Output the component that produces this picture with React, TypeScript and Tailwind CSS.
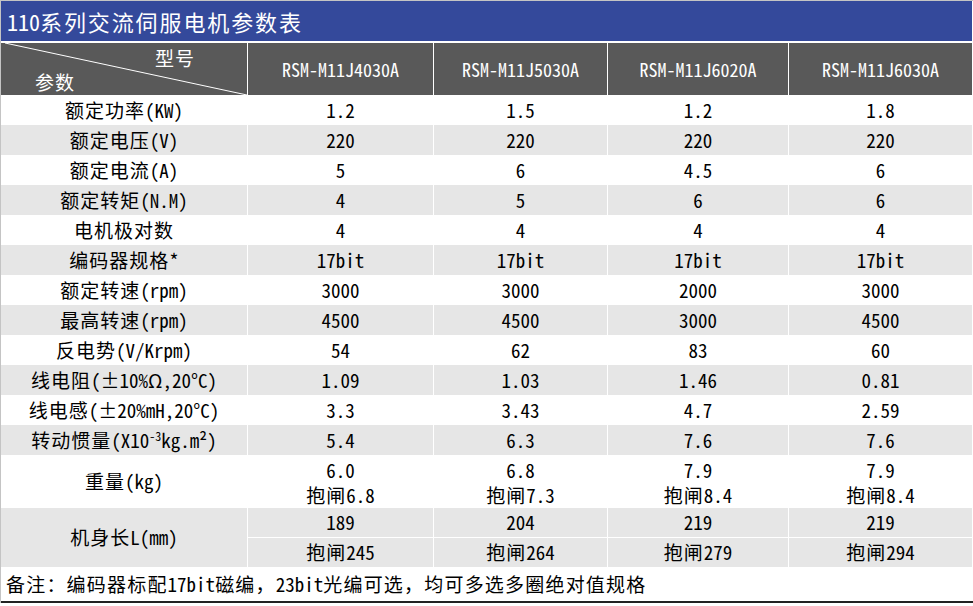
import React from "react";

const font = { fontFamily: '"Noto Sans Mono CJK SC", "Noto Sans CJK SC", "DejaVu Sans", sans-serif' };

const CJK = /([\u3000-\u303f\u4e00-\u9fff\uff00-\uffef]+)/;

function T({ s, cls = "tracking-[1px]" }: { s: string; cls?: string }) {
  const parts = s.split(CJK);
  return (
    <>
      {parts.map((p, i) =>
        p === "" ? null : CJK.test(p) ? (
          <span key={i} className={cls}>
            {p}
          </span>
        ) : (
          <span key={i}>{p}</span>
        )
      )}
    </>
  );
}

type Row = { label: React.ReactNode; vals: string[] };

const rows: Row[] = [
  { label: <T s="额定功率(KW)" />, vals: ["1.2", "1.5", "1.2", "1.8"] },
  { label: <T s="额定电压(V)" />, vals: ["220", "220", "220", "220"] },
  { label: <T s="额定电流(A)" />, vals: ["5", "6", "4.5", "6"] },
  { label: <T s="额定转矩(N.M)" />, vals: ["4", "5", "6", "6"] },
  { label: <T s="电机极对数" />, vals: ["4", "4", "4", "4"] },
  { label: <T s="编码器规格*" />, vals: ["17bit", "17bit", "17bit", "17bit"] },
  { label: <T s="额定转速(rpm)" />, vals: ["3000", "3000", "2000", "3000"] },
  { label: <T s="最高转速(rpm)" />, vals: ["4500", "4500", "3000", "4500"] },
  { label: <T s="反电势(V/Krpm)" />, vals: ["54", "62", "83", "60"] },
  { label: <T s="线电阻(±10%Ω,20°C)" />, vals: ["1.09", "1.03", "1.46", "0.81"] },
  { label: <T s="线电感(±20%mH,20°C)" />, vals: ["3.3", "3.43", "4.7", "2.59"] },
  {
    label: (
      <span>
        <T s="转动惯量" />
        (X10<sup className="text-[12px] -top-[7px]">-3</sup>kg.m²)
      </span>
    ),
    vals: ["5.4", "6.3", "7.6", "7.6"],
  },
];

const models = ["RSM-M11J4030A", "RSM-M11J5030A", "RSM-M11J6020A", "RSM-M11J6030A"];
const weights = [
  ["6.0", "抱闸6.8"],
  ["6.8", "抱闸7.3"],
  ["7.9", "抱闸8.4"],
  ["7.9", "抱闸8.4"],
];
const lengths = [
  ["189", "抱闸245"],
  ["204", "抱闸264"],
  ["219", "抱闸279"],
  ["219", "抱闸294"],
];

const cols = "grid grid-cols-[246px_185px_173px_180px_183px] gap-x-px";

export default function App() {
  return (
    <div className="w-[973px] h-[606px] bg-white text-black" style={font}>
      <div className="border-t border-l border-[#c4c4c4] w-[973px]">
        <div className="h-[40px] w-[971px] bg-[#34499b] text-white text-[22px] leading-[40px] pl-[6px]">
          <T s="110系列交流伺服电机参数表" cls="tracking-[1.9px]" />
        </div>
        <div className="h-[2px]" />
        <div className={cols + " bg-white"}>
          <div className="relative h-[52px] bg-[#595959] text-white text-[19px] leading-[24px] flex flex-col pt-[3px]">
            <svg className="absolute inset-0" width="246" height="52" viewBox="0 0 246 52">
              <line x1="4" y1="0" x2="246" y2="52" stroke="white" strokeWidth="1" />
            </svg>
            <span className="pl-[154px] tracking-[1px]">型号</span>
            <span className="pl-[34px] tracking-[1px]">参数</span>
          </div>
          {models.map((m) => (
            <div key={m} className="h-[52px] bg-[#595959] text-white text-[18px] flex items-center justify-center">
              {m}
            </div>
          ))}
        </div>
        <div className={cols + " bg-white text-[19px]"}>
          {rows.map((r, i) => {
            const bg = i % 2 === 1 ? "bg-[#e6e6e6]" : "bg-white";
            return (
              <React.Fragment key={i}>
                <div className={`h-[30px] ${bg} flex items-center justify-center whitespace-nowrap`}>{r.label}</div>
                {r.vals.map((v, j) => (
                  <div key={j} className={`h-[30px] ${bg} flex items-center justify-center`}>
                    {v}
                  </div>
                ))}
              </React.Fragment>
            );
          })}
          <div className="h-[53px] bg-white flex items-center justify-center">
            <T s="重量(kg)" />
          </div>
          {weights.map((w, j) => (
            <div key={j} className="h-[53px] bg-white flex flex-col items-center justify-center leading-[25px]">
              <span>{w[0]}</span>
              <span>
                <T s={w[1]} />
              </span>
            </div>
          ))}
          <div className="h-[59px] bg-[#e6e6e6] flex items-center justify-center">
            <T s="机身长L(mm)" />
          </div>
          {lengths.map((w, j) => (
            <div key={j} className="h-[59px] bg-white flex flex-col">
              <div className="h-[29px] bg-[#e6e6e6] flex items-center justify-center">{w[0]}</div>
              <div className="h-[29px] mt-px bg-[#e6e6e6] flex items-center justify-center">
                <span>
                  <T s={w[1]} />
                </span>
              </div>
            </div>
          ))}
        </div>
        <div className="h-[36px] flex items-center pl-[5px] text-[19px] border-b-2 border-[#222]">
          <span>
            <T s="备注：编码器标配17bit磁编，23bit光编可选，均可多选多圈绝对值规格" cls="tracking-[1.2px]" />
          </span>
        </div>
      </div>
    </div>
  );
}
